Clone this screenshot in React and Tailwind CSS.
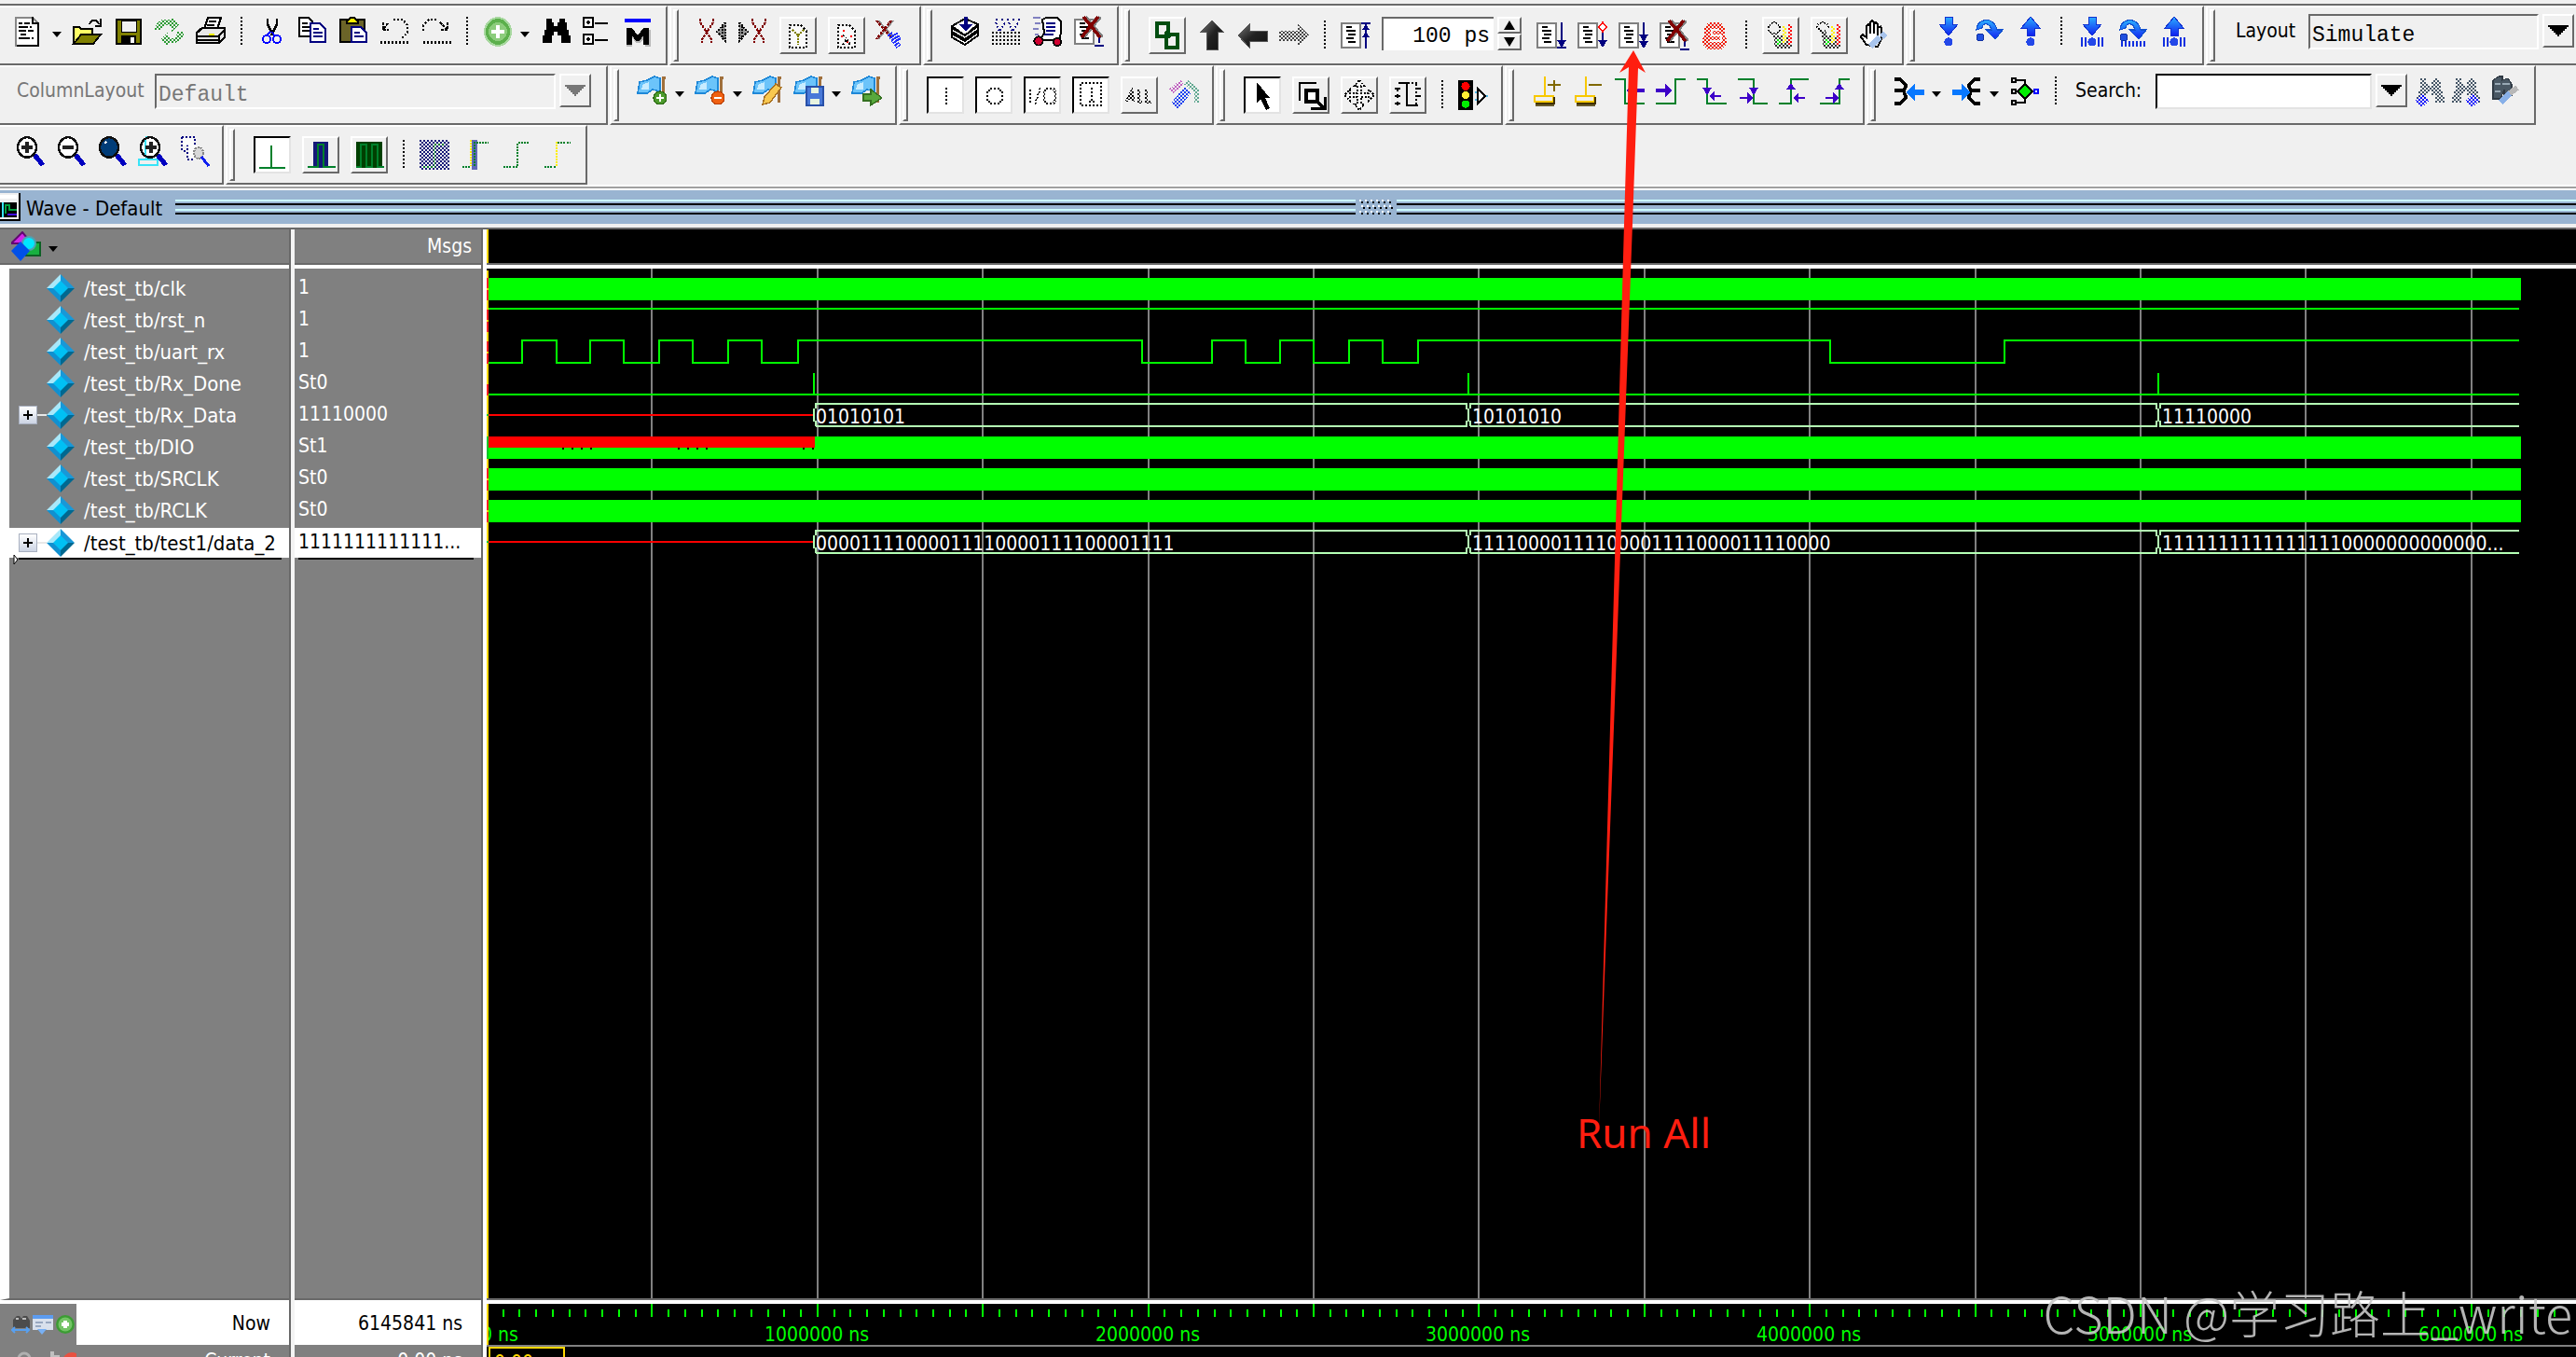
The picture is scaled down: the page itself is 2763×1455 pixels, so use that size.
import React, { useState } from 'react';

const UI_FONT = "font-['DejaVu_Sans_Condensed','DejaVu_Sans',sans-serif]";
const MONO_FONT = "font-['Liberation_Mono',monospace]";

const NAVY = '#000080';
const GREEN = '#00802b';
const VIOLET = '#3d00c8';

/* ---------- shared icon pieces (16 x 16 grid) ---------- */

const Page = () => (
  <>
    <path d="M.5 1.5h10v13H.5z" fill="#fff" stroke="#808080" />
    <path d="M3 3.5h3M3 5.5h5M4 7.5h4M3 9.5h4M4 11.5h4" />
  </>
);

const Flag = () => (
  <>
    <path d="M13 .5h2M13.5 1v13" stroke="#a0703c" strokeWidth="1.5" />
    <path d="M1 3l4-1 4-2 3 1v7l-4-1-3 2H0z" fill="#6cc4fa" stroke="#1e88d8" strokeWidth=".8" />
    <path d="M3 4l3-1v4H2z" fill="#c8ecff" stroke="none" />
  </>
);

const BlueDown = () => (
  <path d="M6 0h4v4h3L8 10 3 4h3z" fill="url(#blueGrad)" stroke="#1030d0" strokeWidth=".5" />
);
const BlueUp = () => (
  <path d="M6 10h4V6h3L8 0 3 6h3z" fill="url(#blueGrad)" stroke="#1030d0" strokeWidth=".5" />
);
const BlueOver = () => (
  <>
    <path d="M1 7C1 1 10-1 12 7h3l-4 5-5-5h3C8 3 4 3 4 6z" fill="url(#blueGrad)" stroke="#1050d0" strokeWidth=".6" />
    <circle cx="3" cy="11" r="2" fill="#2050e0" stroke="#1030a0" strokeWidth=".5" />
  </>
);
const Dot = () => <circle cx="8" cy="13.5" r="2.3" fill="#2448e8" stroke="none" />;

const Lens = ({ fill = '#fff' }) => (
  <>
    <path d="M10.500 10l4.500 5.500" stroke="#0000c0" strokeWidth="2.6" />
    <ellipse cx="6.500" cy="6" rx="5" ry="5.400" fill={fill} stroke="#101010" strokeWidth="1.2" />
  </>
);

const RedX = () => (
  <>
    <path d="M6 0l9 11M14 0L5 11" stroke="#808080" strokeWidth="2" />
    <path d="M5 0l9 11M13 0L4 11" stroke="#800000" strokeWidth="1.8" />
  </>
);

const Plus = () => (
  <>
    <ellipse cx="8" cy="8" rx="7" ry="7.4" fill="#5cb04c" stroke="#a8d8a0" />
    <circle cx="8" cy="8" r="5" fill="#8ccc7c" stroke="none" />
    <path d="M8 4.5v7M4.5 8h7" stroke="#fff" strokeWidth="2.4" />
  </>
);

const Binoculars = ({ fill = '#000' }) => (
  <path
    d="M3 1h3v2h1v2h2V3h1V1h3v2h1v4h1v3h1v4h-5v-4H9V8H7v2H6v4H1v-4h1V7h1V3z"
    fill={fill}
    stroke="none"
  />
);

const ICONS = {
  newDoc: (
    <>
      <path d="M.5.5h9l3 3v12H.5z" fill="#fff" stroke="#888" />
      <path d="M9.5 0v3.5h3V15M1 15.5h12" />
      <path d="M2 3.5h2M5 3.5h3M2 5.5h5M8 5.5h1M2 7.5h4M7 7.5h3M3 9.5h3M2 11.5h6M9 11.5h1" />
    </>
  ),
  open: (
    <>
      <path d="M9 4c1-3 4-3 5 0M15 1v4h-3" />
      <path d="M.5 14.5v-9h3l1 1h6v3" fill="#ff6" />
      <path d="M.5 14.5l4-5h10.500l-4 5z" fill="#808000" />
    </>
  ),
  save: (
    <>
      <path d="M1.500 1.500h13v13h-13z" fill="#808000" />
      <path d="M4 2h8v6H4z" fill="#f0f0f0" stroke="#000" strokeWidth=".5" />
      <path d="M4 10h8v4H4z" fill="#000" stroke="none" />
      <path d="M9 11h2v3H9z" fill="#fff" stroke="none" />
    </>
  ),
  reload: (
    <>
      <path d="M0 7c0-5 6-7 9-5V0l4 4-4 4V5C6 4 4 5 4 7z" fill="#2c9a34" stroke="none" />
      <path d="M16 8c0 5-6 7-9 6v2l-4-4 4-4v3c3 1 5 0 5-3z" fill="#2c9a34" stroke="none" />
    </>
  ),
  print: (
    <>
      <path d="M4.500 6.500l2-6h7l-2 6z" fill="#fff" />
      <path d="M7 2.500h4M6 4.500h4" />
      <path d="M.5 8.500l3-2.500h12v5l-3 3H.5z" fill="#e8e8e8" strokeWidth="1.300" />
      <path d="M1 10.500h11l3-3M1 12.500h11M12.500 10v4" />
      <path d="M7 9.500h3" stroke="#ee0" />
    </>
  ),
  cut: (
    <>
      <path d="M5.500 1v3l1 2 1 2M10.500 1v3l-1 2-2 4" strokeWidth="1.300" />
      <path d="M7 8L5 10M8 8l1 2" stroke="#00f" />
      <circle cx="5" cy="12" r="2" stroke="#00f" />
      <circle cx="10.500" cy="12" r="2" stroke="#00f" />
    </>
  ),
  copy: (
    <>
      <path d="M.5.5h5l2 2v8h-7z" fill="#fff" />
      <path d="M2 3.500h3M2 5.500h4M2 7.500h4" />
      <path d="M6.500 3.500h5l3 3v7h-8z" fill="#fff" stroke={NAVY} />
      <path d="M8 6.500h3M8 8.500h5M8 10.500h5" stroke={NAVY} />
    </>
  ),
  paste: (
    <>
      <path d="M.5 1.500h13v12H.5z" fill="#6b6428" />
      <path d="M4 2.500L6 .5h2l2 2v1H4z" fill="#fe0" />
      <path d="M6.500 5.500h5l3 3v5h-8z" fill="#fff" stroke={NAVY} />
      <path d="M8 8.500h3M8 10.500h5" stroke={NAVY} />
    </>
  ),
  undo: (
    <>
      <path d="M1.500 3v4h3M4 3.500L1.500 7" strokeDasharray="1.500 .5" />
      <path d="M7 1.500h5l2.500 3v4l-3 3" strokeDasharray="1 1" strokeWidth="1.200" />
      <path d="M0 13.500h15" strokeDasharray="1 1" strokeWidth="1.500" />
    </>
  ),
  redo: (
    <>
      <path d="M14 3v4h-4M10 3l4 4" strokeDasharray="1.500 .5" />
      <path d="M8 1.500H4l-3 3v4" strokeDasharray="1 1" strokeWidth="1.200" />
      <path d="M1 13.500h15" strokeDasharray="1 1" strokeWidth="1.500" />
    </>
  ),
  add: <Plus />,
  find: <Binoculars />,
  tree: (
    <>
      <path d="M1 .5h5v5H1zM1 9.500h5v5H1z" fill="#fff" />
      <path d="M2.500 3h2.200M3.500 2v2.200M2.500 12h2.200M3.500 11v2.200M7 3.500h7M7 12.500h7" />
    </>
  ),
  macro: (
    <>
      <path d="M2 7h3l3 4 3-4h4v9h-3v-5l-3 3H7l-2-3v5H2z" fill="#b8b8b8" stroke="none" />
      <path d="M1 1h14v2H1z" fill="#00f" stroke="none" />
      <path d="M2 6h3l3 4 3-4h3v9h-3v-5l-2 3H7l-2-3v5H2z" fill="#000" stroke="none" />
    </>
  ),
  waveCutL: (
    <>
      <path d="M1.500 1v2l6 9v2M8.500 1v2l-6 9v2" stroke="#800000" strokeWidth="1.200" strokeDasharray="1.500 .5" />
      <path d="M15 3l-4.500 5 4.500 5zM13.500 5v6" fill="#999" strokeDasharray="1 .6" />
    </>
  ),
  waveCutR: (
    <>
      <path d="M7.500 1v2l6 9v2M14.500 1v2l-6 9v2" stroke="#800000" strokeWidth="1.200" strokeDasharray="1.500 .5" />
      <path d="M.5 3L5 8l-4.500 5zM2 5v6" fill="#999" strokeDasharray="1 .6" />
    </>
  ),
  docY: (
    <>
      <path d="M3.500 2.500h6l3 3v9h-9z" fill="#fafafa" strokeDasharray="1 1" />
      <path d="M5 5l3 3 3-3M8 8v5" stroke="#808000" strokeDasharray="1 .5" />
    </>
  ),
  docDots: (
    <>
      <path d="M3.500 2.500h6l3 3v9h-9z" fill="#fafafa" strokeDasharray="1 1" />
      <path d="M6 5.500h1M10 8.500h1M5 8.500h1M8 11.500h1" stroke="#f00" />
      <path d="M6 13l2-3 2 3M6 8l2 1" strokeDasharray="1 1" />
    </>
  ),
  waveErase: (
    <>
      <path d="M1 0l8 9M9 0L1 10" stroke="#909090" />
      <path d="M0 0l8 9M8 0L0 10" stroke="#800000" strokeWidth="1.200" strokeDasharray="1.500 .5" />
      <path d="M7 7l5 7M10 7l2 4" stroke="#2030ff" strokeWidth="3" strokeDasharray="1 .6" />
    </>
  ),
  stackDown: (
    <>
      <path d="M.5 11l7 4 7-5v-2l-7 5-7-4zM.5 8l7 4 7-5V5l-7 5-7-4zM.5 5l7-4 7 3-7 6z" fill="#fff" />
      <path d="M8 0v6" stroke={NAVY} strokeWidth="2" />
      <path d="M4.500 4h7L8 8z" fill={NAVY} stroke="none" />
    </>
  ),
  compileAll: (
    <>
      <path d="M2 1.500h14" stroke={NAVY} strokeDasharray="1 2" />
      <path d="M2 3l2 5 3-5M9 3l2 5 3-5" stroke={NAVY} strokeDasharray="1 1" />
      <path d="M0 8.500h16M0 10.500h16M0 12.500h16M0 14.500h16" strokeDasharray="1 1" />
    </>
  ),
  simulate: (
    <>
      <path d="M0 .5h4M1 3.500h3M0 6.500h3M1 9.500h2" stroke="#8080c0" />
      <path d="M5 1.500l2-1h6l2 2v6l-1 4H4l2-4z" fill="#fff" />
      <path d="M7 3.500h5M7 5.500h5M7 7.500h5M6 9.500h5" stroke={NAVY} />
      <circle cx="3" cy="13" r="2.300" fill="#d00030" />
      <circle cx="13" cy="13.500" r="2" fill="#d00030" />
    </>
  ),
  simBreak: (
    <>
      <Page />
      <path d="M13.500 8v6M11 15.500h5" stroke={NAVY} />
      <RedX />
    </>
  ),
  chain: (
    <>
      <path d="M2.500 1.500h6v7h-6z" stroke="#004d10" strokeWidth="2" />
      <path d="M7.500 7.500h6v7h-6z" stroke="#004d10" strokeWidth="2" />
      <path d="M7 6l3 3" stroke="#004d10" strokeWidth="2" />
    </>
  ),
  arrowUp: <path d="M8 0l6 6h-3v9.500H5V6H2z" fill="url(#darkGrad)" stroke="#555" strokeWidth=".5" />,
  arrowLeft: <path d="M0 8l6-6v3.500h9.500V11H6v3.500z" fill="url(#darkGrad)" stroke="#555" strokeWidth=".5" />,
  arrowRight: <path d="M16 8l-6-6v3.500H0V11h10v3.500z" fill="#444" stroke="none" />,
  restart: (
    <>
      <Page />
      <path d="M13.500 15V2M11 1.500h5" stroke={NAVY} />
      <path d="M11.500 5l2-3 2 3zM11.500 9l2-3 2 3z" fill={NAVY} stroke="none" />
    </>
  ),
  run: (
    <>
      <Page />
      <path d="M13.500 1v12M11 14.500h5" stroke={NAVY} />
      <path d="M11 10.500h5l-2.500 4z" fill={NAVY} stroke="none" />
    </>
  ),
  runStep: (
    <>
      <Page />
      <path d="M13.500 6v7" stroke={NAVY} />
      <path d="M13.500 1l2 2.500-2 2.500-2-2.500z" fill="#fff" stroke="#f00" strokeWidth=".8" />
      <path d="M11 10.500h5l-2.500 4z" fill={NAVY} stroke="none" />
    </>
  ),
  runAll: (
    <>
      <Page />
      <path d="M13.500 1v12" stroke={NAVY} />
      <path d="M11 7.500h5l-2.500 4zM11 11h5l-2.500 4z" fill={NAVY} stroke="none" />
    </>
  ),
  stop: (
    <>
      <path d="M4 1h7l2 3v4l1 2v3l-3 2.500H4L1 13v-3l1-2V4z" fill="#f01800" stroke="none" />
      <path d="M10 5H6v3h5v3H5" stroke="#fff" strokeWidth="1.300" />
    </>
  ),
  profA: (
    <>
      <circle cx="4.500" cy="4" r="3" />
      <path d="M4 8h10v7H5z" fill="#333" stroke="none" />
      <path d="M10 3v9" stroke="#fe0" strokeWidth="2" />
      <path d="M13 2v11" stroke="#f00" strokeWidth="2" />
      <path d="M7 10v3" stroke="#0e0" strokeWidth="2" />
    </>
  ),
  profB: (
    <>
      <path d="M1 4c1-4 6-4 7 0M2 4l4 4M6 5v3" />
      <path d="M4 8h10v7H5z" fill="#333" stroke="none" />
      <path d="M10 3v9" stroke="#fe0" strokeWidth="2" />
      <path d="M13 2v11" stroke="#f00" strokeWidth="2" />
      <path d="M7 10v3" stroke="#0e0" strokeWidth="2" />
    </>
  ),
  hand: (
    <>
      <path d="M4 13L.8 8.500l1-1L4 9V3l1-1 1 1V1l1-1 1.200 1v1l1-1 1 1v2l1.300-.8L12 4v6l-2 4z" fill="#fff" />
      <path d="M6 3v4M8.200 2v5M10.200 4v4" />
      <path d="M6 14l5-5M12 9l2-2" stroke="#a8c4ec" strokeWidth="3" />
    </>
  ),
  stepIn: (<><BlueDown /><Dot /></>),
  stepOver: <BlueOver />,
  stepOut: (<><BlueUp /><Dot /></>),
  stepInC: (
    <>
      <BlueDown /><Dot />
      <path d="M2.500 11v5M4.500 11v5M11.500 11v5M13.500 11v5" stroke="#1030e0" />
    </>
  ),
  stepOverC: (
    <>
      <BlueOver />
      <path d="M1.500 14.500h14" stroke="#1030e0" strokeWidth="3" strokeDasharray="1 1" />
    </>
  ),
  stepOutC: (
    <>
      <BlueUp /><Dot />
      <path d="M2.500 11v5M4.500 11v5M11.500 11v5M13.500 11v5" stroke="#1030e0" />
    </>
  ),
  flagAdd: (
    <>
      <Flag />
      <circle cx="12" cy="11.500" r="3.500" fill="#4c9a2c" stroke="#2c6a14" strokeWidth=".6" />
      <path d="M12 9.500v4M10 11.500h4" stroke="#fff" strokeWidth="1.300" />
    </>
  ),
  flagDel: (
    <>
      <Flag />
      <circle cx="12" cy="11.500" r="3.500" fill="#f06010" stroke="#b84000" strokeWidth=".6" />
      <path d="M10 11.500h4" stroke="#fff" strokeWidth="1.300" />
    </>
  ),
  flagEdit: (
    <>
      <Flag />
      <path d="M5 15l1-4 6-7 3 2-6 8z" fill="#f8c850" stroke="#a87020" strokeWidth=".7" />
    </>
  ),
  flagSave: (
    <>
      <Flag />
      <path d="M6.500 5.500h9v10h-9z" fill="#4878d8" stroke="#2850a8" strokeWidth=".7" />
      <path d="M9 6h4v3H9zM8.500 12h5v3h-5z" fill="#e8f4e0" stroke="none" />
    </>
  ),
  flagGo: (
    <>
      <Flag />
      <path d="M6 9.500h4V7l6 4.500-6 4V13H6z" fill="#58a83c" stroke="#347020" strokeWidth=".7" />
    </>
  ),
  portI: <path d="M8.500 4v8M7 12.500h3M7 4.500h2" strokeWidth="1.300" />,
  portO: <path d="M6 4.500h5l1.500 2v4l-1.500 2H6l-1.500-2v-4z" strokeWidth="1.300" />,
  portIO: <path d="M1.500 4v9M7 4l-3 9M10 4.500h4l1 2v4l-1 2h-4l-1-2v-4z" strokeWidth="1.200" />,
  portInt: <path d="M2.500 1.500h11v12h-11zM7 4.500h1.500v7M7 11.500h3" />,
  portAll: <path d="M1 11.500l3-6 1 6M2 9.500h3M7.500 5v6.500h2M11.500 5v6.500h3" strokeWidth="1.500" />,
  portEdit: (
    <>
      <path d="M3 14l7-9" stroke="#1840f0" strokeWidth="5" />
      <path d="M1 6l6-5" stroke="#c060c0" strokeWidth="3" />
      <path d="M9 1l6 5v6" stroke="#60a890" strokeWidth="3" />
    </>
  ),
  pointer: <path d="M5 1v11l2-2 3 6 2-1-2.500-5.500H12z" fill="#000" stroke="none" />,
  zoomBox: (
    <>
      <path d="M2 11V1.500h9" strokeWidth="1.200" />
      <path d="M5.500 5.500h6v6h-6z" fill="#fff" strokeWidth="2" />
      <path d="M8 15h7.500V9M11 11l4 4" strokeWidth="1.500" />
    </>
  ),
  pan: (
    <path
      d="M8 0l2.500 3H9v4h4V5l3 3-3 3V9H9v4h1.500L8 16l-2.500-3H7V9H3v2L0 8l3-3v2h4V3H5.500z"
      strokeWidth=".9"
      strokeDasharray="1 .8"
      fill="#fff"
    />
  ),
  editWave: (
    <>
      <path d="M3 1.500h4.500v12h6" />
      <path d="M8 1.500h6M12.500 2v11" strokeDasharray="1 1" />
      <path d="M1 4.500h3M1 8.500h3M1 12.500h3M2.500 4v2M2.500 7.500v2M2.500 11.500v2M12 4.500h3M12 8.500h3" />
    </>
  ),
  traffic: (
    <>
      <path d="M0 0h8v16H0z" fill="#000" stroke="none" />
      <circle cx="4" cy="3.200" r="2.300" fill="#f00" stroke="none" />
      <circle cx="4" cy="8" r="2" fill="#fe3" stroke="none" />
      <circle cx="4" cy="12.800" r="2" fill="#0e0" stroke="none" />
      <path d="M9 6.500h2M9 10.500h2M15 8.500h1" stroke="#50b8e8" />
      <path d="M10.500 4.500v8l4-4z" fill="#fff" />
    </>
  ),
  cursorAdd: (
    <>
      <path d="M1.500 15.500h10" stroke="#665a30" />
      <path d="M6.500 0v11M1 10.500h10v3H1z" stroke="#f8c800" strokeWidth="1.300" />
      <path d="M11.500 11v3.500H1.500" stroke="#403000" />
      <path d="M8 4.500h7M11.500 2v6" stroke="#806800" strokeWidth="1.300" />
    </>
  ),
  cursorDel: (
    <>
      <path d="M1.500 15.500h10" stroke="#665a30" />
      <path d="M6.500 0v11M1 10.500h10v3H1z" stroke="#f8c800" strokeWidth="1.300" />
      <path d="M11.500 11v3.500H1.500" stroke="#403000" />
      <path d="M8 4.500h7" stroke="#806800" strokeWidth="1.300" />
    </>
  ),
  prevTrans: (
    <>
      <path d="M0 1.500h5.500v13H16" stroke={GREEN} />
      <path d="M16 7.500h-7" stroke={VIOLET} strokeWidth="2" />
      <path d="M6 7.500L10 4v7z" fill={VIOLET} stroke="none" />
    </>
  ),
  nextTrans: (
    <>
      <path d="M0 14.500h10.500v-13H16" stroke={GREEN} />
      <path d="M0 7.500h6" stroke={VIOLET} strokeWidth="2" />
      <path d="M9 7.500L5 4v7z" fill={VIOLET} stroke="none" />
    </>
  ),
  prevFall: (
    <>
      <path d="M0 1.500h5.500v13H16" stroke={GREEN} />
      <path d="M13 10.500H8" stroke={VIOLET} />
      <path d="M6.500 10.500l3-3v6zM3 6h5l-2.500 4z" fill={VIOLET} stroke="none" />
    </>
  ),
  nextFall: (
    <>
      <path d="M0 1.500h8.500v13H16" stroke={GREEN} />
      <path d="M1 11.500h5" stroke={VIOLET} />
      <path d="M8 11.500l-3-3v6zM6 6h5l-2.500 4z" fill={VIOLET} stroke="none" />
    </>
  ),
  prevRise: (
    <>
      <path d="M0 14.500h6.500v-13H16" stroke={GREEN} />
      <path d="M14 11.500H9" stroke={VIOLET} />
      <path d="M7.500 11.500l3-3v6zM4 7h5L6.500 3.500z" fill={VIOLET} stroke="none" />
    </>
  ),
  nextRise: (
    <>
      <path d="M0 14.500h10.500v-13H16" stroke={GREEN} />
      <path d="M3 11.500h5" stroke={VIOLET} />
      <path d="M10 11.500l-3-3v6zM8 7h5l-2.500-3.500z" fill={VIOLET} stroke="none" />
    </>
  ),
  drivers: (
    <>
      <path d="M0 1.500h3l3 3v1L5 7.500H0M0 14.500h3l3-3v-1l-1-2" strokeWidth="1.700" />
      <path d="M16 7v3h-5v3L6 8.500 11 4v3z" fill="#0878ff" stroke="none" />
    </>
  ),
  readers: (
    <>
      <path d="M15 1.500h-3l-3 3v1l1 2h5M15 14.500h-3l-3-3v-1l1-2" strokeWidth="1.700" />
      <path d="M0 7v3h5v3l5-4.500L5 4v3z" fill="#0878ff" stroke="none" />
    </>
  ),
  fanout: (
    <>
      <path d="M1 1h2v2H1zM1 7h2v2H1zM1 13h2v2H1zM3 2h5v12H3M3 8h10" />
      <path d="M8 4l4 4-4 4-4-4z" fill="#0e0" />
      <path d="M13 7h2v2h-2z" stroke="#00f" fill="#fff" />
    </>
  ),
  findPrev: (
    <>
      <Binoculars fill="#445566" />
      <path d="M0 13l4-3.500 4 3.500-4 3.500z" fill="#00f" stroke="none" />
    </>
  ),
  findNext: (
    <>
      <Binoculars fill="#445566" />
      <path d="M16 13l-4-3.500L8 13l4 3.500z" fill="#00f" stroke="none" />
    </>
  ),
  findOpts: (
    <>
      <path d="M1 2l3-2h2v2l3-1 2 3v6H7V7L5 12H1V7z" fill="#4a5864" stroke="#303a44" strokeWidth=".6" />
      <path d="M2 4h3M6 4h4M2 8h3" stroke="#98a8b4" />
      <path d="M5 14l5-5" stroke="#88b0e8" strokeWidth="3.500" />
      <path d="M10 9l4-3" stroke="#b8b8b8" strokeWidth="3" />
    </>
  ),
  zoomIn: (
    <>
      <Lens />
      <path d="M6.500 3v6M3.500 6h6" strokeWidth="1.800" stroke="#222" />
    </>
  ),
  zoomOut: (
    <>
      <Lens />
      <path d="M3.500 6h6" strokeWidth="1.800" stroke="#222" />
    </>
  ),
  zoomFull: (
    <>
      <Lens fill="#003c78" />
      <path d="M4 4l1-1" stroke="#fff" />
    </>
  ),
  zoomCursor: (
    <>
      <path d="M4.500 0v12M.5 12.500h10v3H.5z" stroke="#38e4f8" />
      <Lens />
      <path d="M4 2v8" stroke="#38e4f8" />
      <path d="M7 3v6M4 6h6" strokeWidth="1.800" stroke="#222" />
    </>
  ),
  zoomRange: (
    <>
      <path d="M1.500.5h7v5M1.500.5v7l3 1M4.500 4.500v8h3" stroke={NAVY} strokeDasharray="1 1" />
      <path d="M2 1h6v4H2zM5 5h6v7H5z" fill="#fff" stroke="none" opacity=".7" />
      <ellipse cx="10.500" cy="9" rx="2.500" ry="3" fill="#d8d8d8" stroke="#888" strokeDasharray="1 .5" />
      <path d="M12 11l4 5" stroke="#1020f0" strokeWidth="1.500" />
    </>
  ),
  clockEdge: <path d="M1 15h14M7.500 15V3" stroke={GREEN} />,
  pulseBlue: (
    <>
      <path d="M4 1h8v14H4z" fill="#141878" stroke="none" />
      <path d="M1 14.500h5.500v-12h3v12H16" stroke={GREEN} />
    </>
  ),
  pulseGreen: (
    <>
      <path d="M1 1h14v14H1z" fill="#004000" stroke="none" />
      <path d="M1 14.500h2.500v-12h3v12h3v-12h3v12H16" stroke={GREEN} />
    </>
  ),
  expandFull: (
    <>
      <path d="M0 0h16v16H0z" fill="#141878" stroke="none" />
      <path d="M2 14.500h6v-12h6" stroke={GREEN} />
    </>
  ),
  expandBlue: (
    <>
      <path d="M6 0h3v16H6z" fill="#6068b8" stroke="none" />
      <path d="M1 14.500h4" stroke={GREEN} strokeDasharray="1 .5" />
      <path d="M5.500 0v14" stroke="#fe0" strokeDasharray="1 .5" />
      <path d="M7.500 14V1.500H15" stroke={GREEN} strokeDasharray="1 .5" />
    </>
  ),
  expandGreen: <path d="M1 14.500h7.500v-13H15" stroke={GREEN} strokeDasharray="1 .6" />,
  expandYellow: (
    <>
      <path d="M1 14.500h6M8 1.500h7" stroke={GREEN} strokeDasharray="1 .6" />
      <path d="M7.500 1v13" stroke="#fe0" strokeDasharray="1 .5" />
    </>
  ),
};

// disabled tools are drawn through a checkerboard
const DIM = [
  'reload',
  'arrowRight',
  'stop',
  'profA',
  'profB',
  'portI',
  'portO',
  'portIO',
  'portInt',
  'portAll',
  'portEdit',
  'findPrev',
  'findNext',
  'expandFull',
];

const Icon = ({ name }) => (
  <svg
    viewBox="0 0 16 16"
    className="h-8 w-8 shrink-0 overflow-visible"
    fill="none"
    stroke="#000"
    shapeRendering="crispEdges"
    aria-hidden="true"
  >
    {DIM.includes(name) ? <g mask="url(#dither)">{ICONS[name]}</g> : ICONS[name]}
  </svg>
);

const IconDefs = () => (
  <svg className="absolute h-0 w-0" aria-hidden="true">
    <defs>
      <pattern id="checker" width="2" height="2" patternUnits="userSpaceOnUse">
        <path d="M0 0h1v1H0zM1 1h1v1H1z" fill="#fff" shapeRendering="crispEdges" />
      </pattern>
      <mask id="dither" maskUnits="userSpaceOnUse" x="0" y="0" width="16" height="16">
        <rect width="16" height="16" fill="url(#checker)" />
      </mask>
      <linearGradient id="blueGrad" x1="0" y1="0" x2="0" y2="1">
        <stop offset="0" stopColor="#2cb0ff" />
        <stop offset="1" stopColor="#1020f0" />
      </linearGradient>
      <linearGradient id="darkGrad" x1="0" y1="0" x2="1" y2="1">
        <stop offset="0" stopColor="#777" />
        <stop offset=".5" stopColor="#222" />
        <stop offset="1" stopColor="#111" />
      </linearGradient>
    </defs>
  </svg>
);

/* ---------- toolbar pieces ---------- */

const Caret = () => (
  <svg viewBox="0 0 5 3" className="mt-1.5 h-1.5 w-2.5" aria-hidden="true">
    <path d="M0 0h5L2.500 3z" fill="#000" />
  </svg>
);

const Tool = ({ name }) => (
  <button type="button" aria-label={name} className="flex shrink-0">
    <Icon name={name} />
  </button>
);

const MenuTool = ({ name }) => (
  <button type="button" aria-label={name} className="flex w-[50px] shrink-0 items-center justify-between">
    <Icon name={name} />
    <Caret />
  </button>
);

const RaisedTool = ({ name }) => (
  <button
    type="button"
    aria-label={name}
    className="flex h-10 w-10 shrink-0 items-center justify-center border-2 border-t-white border-l-white border-r-[#696969] border-b-[#696969]"
  >
    <Icon name={name} />
  </button>
);

const SunkenTool = ({ name }) => (
  <button
    type="button"
    aria-label={name}
    aria-pressed="true"
    className="flex h-10 w-10 shrink-0 items-center justify-center border-2 border-t-black border-l-black border-r-[#e3e3e3] border-b-[#e3e3e3] bg-white"
  >
    <Icon name={name} />
  </button>
);

const Separator = () => (
  <div className="flex w-2.5 shrink-0 justify-center">
    <div className="h-8 w-0.5 bg-[repeating-linear-gradient(#000_0_2px,transparent_2px_4px)]" />
  </div>
);

const Toolbar = ({ children, first, last, tall }) => (
  <div
    className={`flex h-16 border-t-2 border-b-2 border-t-white border-b-[#696969] ${first ? 'pl-4' : 'border-l-2 border-l-white pl-0.5'} ${last ? 'flex-1' : 'border-r-2 border-r-[#696969] pr-3.5'}`}
  >
    {!first && (
      <div className="mt-0.5 mr-5 h-14 w-1.5 shrink-0 border-2 border-t-white border-l-white border-r-[#696969] border-b-[#696969]" />
    )}
    <div className={`mt-2.5 flex items-center gap-3 ${tall ? 'h-10' : 'h-8'} ${last ? 'flex-1' : ''}`}>
      {children}
    </div>
  </div>
);

const DropButton = ({ label, muted }) => (
  <button
    type="button"
    aria-label={label}
    className="flex h-9 w-[34px] shrink-0 items-center justify-center border-2 border-t-white border-l-white border-r-[#696969] border-b-[#696969]"
  >
    <svg viewBox="0 0 13 7" className="mt-0.5 h-3.5 w-[26px]" shapeRendering="crispEdges" aria-hidden="true">
      <path d="M1 0h11v1h-1v1h-1v1H9v1H8v1H7v1H6V5H5V4H4V3H3V2H2V1H1z" fill={muted ? '#777' : '#000'} />
    </svg>
  </button>
);

const TopToolbars = () => {
  const [runLength, setRunLength] = useState('100 ps');
  const [search, setSearch] = useState('');

  return (
    <header className="flex flex-col pt-1">
      <div className="h-0.5 bg-[#696969]" />

      {/* Standard, edit, compile, simulate, step and layout bars */}
      <div className="flex gap-0.5">
        <Toolbar first>
          <MenuTool name="newDoc" />
          <Tool name="open" />
          <Tool name="save" />
          <Tool name="reload" />
          <Tool name="print" />
          <Separator />
          <Tool name="cut" />
          <Tool name="copy" />
          <Tool name="paste" />
          <Tool name="undo" />
          <Tool name="redo" />
          <Separator />
          <MenuTool name="add" />
          <Tool name="find" />
          <Tool name="tree" />
          <Tool name="macro" />
        </Toolbar>
        <Toolbar tall>
          <div className="flex gap-3 self-start">
            <Tool name="waveCutL" />
            <Tool name="waveCutR" />
          </div>
          <RaisedTool name="docY" />
          <RaisedTool name="docDots" />
          <Tool name="waveErase" />
        </Toolbar>
        <Toolbar>
          <Tool name="stackDown" />
          <Tool name="compileAll" />
          <Tool name="simulate" />
          <Tool name="simBreak" />
        </Toolbar>
        <Toolbar tall>
          <RaisedTool name="chain" />
          <Tool name="arrowUp" />
          <Tool name="arrowLeft" />
          <Tool name="arrowRight" />
          <Separator />
          <Tool name="restart" />
          <div className="flex w-[154px] shrink-0 gap-1 self-start">
            <input
              aria-label="Run length"
              value={runLength}
              onChange={(e) => setRunLength(e.target.value)}
              className={`h-9 w-[120px] border-t-2 border-l-2 border-[#696969] bg-white pt-1 pr-1 text-right text-[23px] text-black outline-none ${MONO_FONT}`}
            />
            <div className="flex w-[26px] flex-col">
              <button
                type="button"
                aria-label="Increase run length"
                className="flex h-[18px] items-center justify-center border-2 border-t-white border-l-white border-r-[#696969] border-b-[#696969]"
              >
                <svg viewBox="0 0 6 5" className="h-2.5 w-3" aria-hidden="true"><path d="M3 0l3 5H0z" /></svg>
              </button>
              <button
                type="button"
                aria-label="Decrease run length"
                className="flex h-[18px] items-center justify-center border-2 border-t-white border-l-white border-r-[#696969] border-b-[#696969]"
              >
                <svg viewBox="0 0 6 5" className="h-2.5 w-3" aria-hidden="true"><path d="M0 0h6L3 5z" /></svg>
              </button>
            </div>
          </div>
          <Tool name="run" />
          <Tool name="runStep" />
          <Tool name="runAll" />
          <Tool name="simBreak" />
          <Tool name="stop" />
          <Separator />
          <RaisedTool name="profA" />
          <RaisedTool name="profB" />
          <Tool name="hand" />
        </Toolbar>
        <Toolbar>
          <Tool name="stepIn" />
          <Tool name="stepOver" />
          <Tool name="stepOut" />
          <Separator />
          <Tool name="stepInC" />
          <Tool name="stepOverC" />
          <Tool name="stepOutC" />
        </Toolbar>
        <Toolbar last>
          <label htmlFor="layout" className={`w-[68px] shrink-0 pl-0.5 text-[21px] ${UI_FONT}`}>Layout</label>
          <div className="flex flex-1 gap-1 pr-0.5">
            <select
              id="layout"
              className={`h-[38px] min-w-0 flex-1 appearance-none border-2 border-t-[#696969] border-l-[#696969] border-r-white border-b-white bg-transparent pt-1 pl-0.5 text-[23px] text-black outline-none ${MONO_FONT}`}
            >
              <option>Simulate</option>
            </select>
            <DropButton label="Open layout list" />
          </div>
        </Toolbar>
      </div>

      {/* Column layout, bookmarks, ports, mouse mode, cursors and search bars */}
      <div className="flex gap-0.5">
        <Toolbar first>
          <label htmlFor="columns" className={`w-[138px] shrink-0 pl-0.5 text-[21px] text-[#777] ${UI_FONT}`}>ColumnLayout</label>
          <div className="mr-0.5 flex w-[468px] gap-1">
            <select
              id="columns"
              disabled
              className={`h-[38px] min-w-0 flex-1 appearance-none border-2 border-t-[#696969] border-l-[#696969] border-r-white border-b-white bg-transparent pt-1 pl-0.5 text-[23px] text-[#777] opacity-100 outline-none ${MONO_FONT}`}
            >
              <option>Default</option>
            </select>
            <DropButton label="Open column list" muted />
          </div>
        </Toolbar>
        <Toolbar>
          <MenuTool name="flagAdd" />
          <MenuTool name="flagDel" />
          <Tool name="flagEdit" />
          <MenuTool name="flagSave" />
          <Tool name="flagGo" />
        </Toolbar>
        <Toolbar tall>
          <SunkenTool name="portI" />
          <SunkenTool name="portO" />
          <SunkenTool name="portIO" />
          <SunkenTool name="portInt" />
          <RaisedTool name="portAll" />
          <Tool name="portEdit" />
        </Toolbar>
        <Toolbar tall>
          <SunkenTool name="pointer" />
          <RaisedTool name="zoomBox" />
          <RaisedTool name="pan" />
          <RaisedTool name="editWave" />
          <Separator />
          <Tool name="traffic" />
        </Toolbar>
        <Toolbar>
          <Tool name="cursorAdd" />
          <Tool name="cursorDel" />
          <Tool name="prevTrans" />
          <Tool name="nextTrans" />
          <Tool name="prevFall" />
          <Tool name="nextFall" />
          <Tool name="prevRise" />
          <Tool name="nextRise" />
        </Toolbar>
        <Toolbar>
          <MenuTool name="drivers" />
          <MenuTool name="readers" />
          <Tool name="fanout" />
          <Separator />
          <label htmlFor="search" className={`w-[78px] shrink-0 pl-1 text-[21px] ${UI_FONT}`}>Search:</label>
          <div className="flex w-[270px] gap-1">
            <input
              id="search"
              value={search}
              onChange={(e) => setSearch(e.target.value)}
              className={`h-[38px] min-w-0 flex-1 border-2 border-t-black border-l-black border-r-[#e3e3e3] border-b-[#e3e3e3] bg-white px-1 text-[23px] outline-none ${MONO_FONT}`}
            />
            <DropButton label="Open search history" />
          </div>
          <div className="-ml-1 flex w-[70px] justify-between">
            <Tool name="findPrev" />
            <Tool name="findNext" />
          </div>
          <Tool name="findOpts" />
        </Toolbar>
      </div>

      {/* Zoom and wave expansion bars */}
      <div className="flex gap-0.5">
        <Toolbar first>
          <Tool name="zoomIn" />
          <Tool name="zoomOut" />
          <Tool name="zoomFull" />
          <Tool name="zoomCursor" />
          <Tool name="zoomRange" />
        </Toolbar>
        <Toolbar tall>
          <SunkenTool name="clockEdge" />
          <RaisedTool name="pulseBlue" />
          <RaisedTool name="pulseGreen" />
          <Separator />
          <Tool name="expandFull" />
          <Tool name="expandBlue" />
          <Tool name="expandGreen" />
          <Tool name="expandYellow" />
        </Toolbar>
      </div>
    </header>
  );
};

/* ---------- wave window ---------- */

const TitleRule = () => (
  <div className="flex flex-1 flex-col gap-1">
    <div className="h-1.5 border-t-2 border-b-2 border-t-[#ccffff] border-b-black" />
    <div className="h-1.5 border-t-2 border-b-2 border-t-[#ccffff] border-b-black" />
  </div>
);

const TitleBar = () => (
  <div className="flex h-9 shrink-0 items-center bg-[#99b4d1]">
    <svg viewBox="0 0 11 15" className="h-[30px] w-[22px]" shapeRendering="crispEdges" aria-hidden="true">
      <path d="M0 0h11v15H0z" fill="#000" />
      <path d="M0 0h10v14H0z" fill="#f0f0f0" />
      <path d="M0 1h9v2H0z" fill="#fff" />
      <path d="M0 5h9v8H0z" fill="#000" />
      <path d="M1.500 5v8" stroke="#38e4f8" />
      <path d="M3 11V6.500h2V9h4" stroke="#00a040" fill="none" />
      <path d="M4 11.500h5" stroke="#4010e0" />
    </svg>
    <h1 className={`w-[166px] shrink-0 pt-0.5 pl-1.5 text-[22px] text-black ${UI_FONT}`}>Wave - Default</h1>
    <TitleRule />
    <svg viewBox="0 0 22 8" className="h-4 w-11" shapeRendering="crispEdges" aria-hidden="true">
      <path d="M2 .5h18M3 3.500h18M2 6.500h18" stroke="#fff" strokeDasharray="1 2" />
      <path d="M3 1.500h18M4 4.500h17M3 7.500h18" stroke="#000" strokeDasharray="1 2" />
    </svg>
    <TitleRule />
  </div>
);

const SIGNALS = [
  { name: '/test_tb/clk', value: '1' },
  { name: '/test_tb/rst_n', value: '1' },
  { name: '/test_tb/uart_rx', value: '1' },
  { name: '/test_tb/Rx_Done', value: 'St0' },
  { name: '/test_tb/Rx_Data', value: '11110000', bus: true },
  { name: '/test_tb/DIO', value: 'St1' },
  { name: '/test_tb/SRCLK', value: 'St0' },
  { name: '/test_tb/RCLK', value: 'St0' },
  { name: '/test_tb/test1/data_2', value: '1111111111111...', bus: true, selected: true },
];

const Diamond = () => (
  <svg viewBox="0 0 30 30" className="h-[30px] w-[30px] shrink-0" aria-hidden="true">
    <path d="M15 0v15H0z" fill="#a8e8fa" />
    <path d="M15 0l15 15H15z" fill="#1898d8" />
    <path d="M0 15h15v15z" fill="#1090d0" />
    <path d="M30 15L15 30V15z" fill="#006890" />
    <path d="M15 7l8 8-8 8-8-8z" fill="#00c0f4" />
  </svg>
);

const rowClass = (s) => (s.selected ? 'mt-0.5 h-8 bg-white text-black' : 'h-[34px] text-white');

const NamePane = () => (
  <section className="flex w-[312px] shrink-0 flex-col border-r-2 border-[#696969]">
    <div className="flex h-[38px] shrink-0 items-center gap-2 border-b-2 border-[#696969] bg-[#808080] pl-3">
      <svg viewBox="0 0 32 32" className="h-8 w-8" aria-hidden="true">
        <path d="M0 13L12 1l10 12z" fill="#d028e8" stroke="#600870" strokeWidth="2" />
        <path d="M16 12h15v14H16z" fill="#18b040" stroke="#0c6024" strokeWidth="2" />
        <circle cx="19" cy="13" r="7" fill="#00e8ff" stroke="#50a0b0" strokeWidth="2" />
        <path d="M10 11l10 10-10 11L0 21z" fill="#0050e8" />
      </svg>
      <Caret />
    </div>
    <ul className={`mt-1 flex-1 border-b-2 border-l-[10px] border-b-[#696969] border-l-white bg-[#808080] pt-1 text-[22px] ${UI_FONT}`}>
      {SIGNALS.map((s) => (
        <li key={s.name} className={`flex items-center pl-2.5 whitespace-nowrap ${rowClass(s)}`}>
          <div className="flex w-[30px] shrink-0 items-center">
            {s.bus && (
              <>
                <button
                  type="button"
                  aria-label={`Expand ${s.name}`}
                  className="flex h-5 w-5 items-center justify-center border border-[#a8b0c0] bg-linear-to-b from-white to-[#ccd4e4]"
                >
                  <svg viewBox="0 0 10 10" className="h-2.5 w-2.5" aria-hidden="true">
                    <path d="M5 0v10M0 5h10" stroke="#000" strokeWidth="2" />
                  </svg>
                </button>
                <div className="h-0.5 flex-1 bg-[#e8e8e8]" />
              </>
            )}
          </div>
          <Diamond />
          <span className="pl-2.5">{s.name}</span>
        </li>
      ))}
      <li className="flex items-start" aria-hidden="true">
        <svg viewBox="0 0 6 12" className="-mt-1 ml-1 h-3 w-1.5">
          <path d="M1 1v10l4-5z" fill="#fff" stroke="#000" />
        </svg>
        <div className="mr-2 h-0.5 flex-1 bg-black" />
      </li>
    </ul>
    <div className={`mt-1 shrink-0 text-[21px] ${UI_FONT}`}>
      <div className="flex h-11 items-center bg-white">
        <div className="flex h-full w-[82px] items-center bg-[#808080] pl-3">
          <svg viewBox="0 0 70 22" className="h-[22px] w-[70px]" aria-hidden="true">
            <path d="M2 14V6l4-4h3l2 3 2-3h4l3 5v8H2z" fill="#4c4c4c" />
            <path d="M5 5h3M12 5h4" stroke="#bbb" strokeWidth="2" />
            <path d="M1 17h18M4 14l-3 3 3 3M16 14l3 3-3 3" stroke="#58a0f0" strokeWidth="2" fill="none" />
            <path d="M23 1h22v16H23z" fill="#d8e0ec" />
            <path d="M23 1h22v4H23z" fill="#5c9cf0" />
            <path d="M26 9h8M26 13h6M37 9h6" stroke="#98a8c0" strokeWidth="2" />
            <path d="M28 16h10l-5 6z" fill="#78b0f4" />
            <circle cx="58" cy="11" r="10" fill="#3c9c34" />
            <circle cx="58" cy="11" r="7.500" fill="#74c466" />
            <path d="M58 7v8M54 11h8" stroke="#fff" strokeWidth="4" />
          </svg>
        </div>
        <span className="flex-1 pr-5 text-right text-black">Now</span>
      </div>
      <div className="flex h-9 items-center bg-[#808080]">
        <div className="flex h-full w-[82px] items-center pl-3">
          <svg viewBox="0 0 70 22" className="h-[22px] w-[70px]" aria-hidden="true">
            <circle cx="14" cy="8" r="6" fill="none" stroke="#b0b0b0" strokeWidth="3" />
            <path d="M36 20l12-12M44 0v6h8" stroke="#c0c0c0" strokeWidth="4" fill="none" />
            <circle cx="65" cy="11" r="10" fill="#e85040" />
          </svg>
        </div>
        <span className="flex-1 pr-5 text-right text-white">Current</span>
      </div>
    </div>
  </section>
);

const ValuePane = () => (
  <section className="flex w-[202px] shrink-0 flex-col border-r-2 border-[#696969]">
    <div className={`flex h-[38px] shrink-0 items-center justify-end border-b-2 border-[#696969] bg-[#808080] pt-0.5 pr-2.5 text-[21px] text-white ${UI_FONT}`}>
      Msgs
    </div>
    <ul className={`mt-1 flex-1 border-b-2 border-[#696969] bg-[#808080] pt-1 text-[21px] ${UI_FONT}`}>
      {SIGNALS.map((s) => (
        <li key={s.name} className={`flex items-center overflow-hidden pl-1 whitespace-nowrap ${rowClass(s)}`}>
          {s.value}
        </li>
      ))}
      <li className="mr-2 ml-1 h-0.5 bg-black" aria-hidden="true" />
    </ul>
    <div className={`mt-1 shrink-0 text-[21px] ${UI_FONT}`}>
      <div className="flex h-11 items-center justify-end bg-white pr-5 text-black">6145841 ns</div>
      <div className="flex h-9 items-center justify-end bg-[#808080] pr-5 text-white">0.00 ns</div>
    </div>
  </section>
);

const STEP = 177.4;
const MAJORS = Array.from({ length: 12 }, (_, i) => Math.round((i + 1) * STEP));
const MINORS = Array.from({ length: 125 }, (_, i) => Math.round(((i + 1) * STEP) / 10));
const END = 2180;

// level changes of uart_rx, the line starts low
const UART_EDGES = [38, 75, 111, 147, 185, 221, 259, 295, 334, 703, 778, 814, 851, 887, 925, 961, 999, 1441, 1628];
const UART_PATH = UART_EDGES.reduce((d, x, i) => `${d}H${x}V${i % 2 ? 101 : 77}`, 'M2 101') + `H${END}`;

const BUS_STARTS = [351, 1053, 1793];
const RX_DATA = ['01010101', '10101010', '11110000'];
const DATA_2 = [
  '00001111000011110000111100001111',
  '11110000111100001111000011110000',
  '11111111111111110000000000000...',
];

const Bus = ({ y, labels }) => (
  <g>
    <path d={`M2 ${y + 13}H351`} stroke="#f00" strokeWidth="2" />
    {BUS_STARTS.map((x, i) => {
      const next = BUS_STARTS[i + 1];
      const close = next ? `H${next - 2}v6M${x + 2} ${y + 25}v-6M${x + 2} ${y + 25}H${next - 2}v-6` : `H${END}M${x + 2} ${y + 19}v6H${END}`;
      return (
        <g key={x}>
          <path d={`M${x} ${y + 6}v14M${x + 2} ${y + 6}v-5${close}`} stroke="#b4ffb4" strokeWidth="2" fill="none" />
          <text x={x + (i ? 4 : 2)} y={y + 22} fill="#fff">{labels[i]}</text>
        </g>
      );
    })}
  </g>
);

const CURSOR_MARKS = [10, 44, 78, 124, 214, 248];

const WavePane = () => (
  <section className="ml-1 flex min-w-0 flex-1 flex-col">
    <div className="h-[38px] shrink-0 border-b-2 border-[#696969] bg-black">
      <div className="h-full w-0.5 bg-[#ffd700]" />
    </div>
    <div className="mt-1 min-h-0 flex-1 overflow-hidden border-b-2 border-[#696969] bg-black">
      <svg width="100%" height="100%" shapeRendering="crispEdges" className={`text-[21px] ${UI_FONT}`} role="img" aria-label="Waveforms">
        {MAJORS.map((x) => (
          <rect key={x} x={x - 1} y="0" width="2" height="100%" fill="#808080" />
        ))}
        <rect x="0" y="2" width="2" height="100%" fill="#ffd700" />
        {[10, 214, 248].map((y) => (
          <rect key={y} x="2" y={y} width="2180" height="24" fill="#0f0" />
        ))}
        <path d={`M2 43H${END}`} stroke="#0f0" strokeWidth="2" />
        <path d={UART_PATH} stroke="#0f0" strokeWidth="2" fill="none" />
        <path d={`M2 135H${END}M351 112v22M1053 112v22M1793 112v22`} stroke="#0f0" strokeWidth="2" />
        <rect x="2" y="180" width="2180" height="24" fill="#0f0" />
        <rect x="2" y="180" width="350" height="12" fill="#f00" />
        {[81, 91, 101, 111, 205, 215, 225, 235, 339, 349].map((x) => (
          <rect key={x} x={x} y="192" width="2" height="2" fill="#000" />
        ))}
        <Bus y={144} labels={RX_DATA} />
        <Bus y={280} labels={DATA_2} />
        {CURSOR_MARKS.map((y) => (
          <path key={y} d={y === 124 ? `M1 ${y}v12` : `M1 ${y}v11M1 ${y + 13}v11`} stroke="#ff2020" strokeWidth="2" />
        ))}
        <path d="M1 156v2M1 180v24M1 292v2" stroke="#00c828" strokeWidth="2" />
      </svg>
    </div>
    <div className="mt-1 h-20 shrink-0 overflow-hidden bg-black">
      <svg width="100%" height="80" shapeRendering="crispEdges" className={`text-[21px] ${UI_FONT}`} role="img" aria-label="Timeline">
        {MINORS.map((x) => (
          <rect key={x} x={x - 1} y="6" width="2" height="8" fill="#0f0" />
        ))}
        {MAJORS.map((x) => (
          <rect key={x} x={x - 1} y="0" width="2" height="14" fill="#0f0" />
        ))}
        <text x="-6" y="40" fill="#0f0">0 ns</text>
        {[1, 2, 3, 4, 5, 6].map((n) => (
          <text key={n} x={Math.round(n * 2 * STEP) - 1} y="40" textAnchor="middle" fill="#0f0">{n}000000 ns</text>
        ))}
        <rect x="0" y="0" width="2" height="44" fill="#ffd700" />
        <rect x="0" y="44" width="100%" height="2" fill="#808080" />
        <rect x="3" y="47" width="80" height="30" fill="#000" stroke="#ffd700" strokeWidth="2" />
        <text x="8" y="70" fill="#ffd700">0.00 ns</text>
      </svg>
    </div>
  </section>
);

/* Red pointer with its caption */
const RunAllNote = () => (
  <div className="pointer-events-none absolute top-0 left-0">
    <svg width="2000" height="1300" aria-hidden="true">
      <path d="M1715 1212L1742 240 1747 72 1737 78 1752 54 1765 78 1757 73 1751 240z" fill="#ff1e10" />
    </svg>
    <p className="absolute top-[1184px] left-[1691px] font-['Noto_Sans',sans-serif] text-[44px] leading-[60px] whitespace-nowrap text-[#ff1e10]">
      Run All
    </p>
  </div>
);

export default function App() {
  return (
    <main className="relative flex h-screen flex-col overflow-hidden bg-[#f0f0f0]">
      <IconDefs />
      <TopToolbars />
      <div className="h-1.5 shrink-0 border-t-2 border-b-2 border-white bg-[#a0a0a0]" />
      <TitleBar />
      <div className="mt-1 h-0.5 shrink-0 bg-[#696969]" />
      <div className="-mb-[23px] flex min-h-0 flex-1 bg-white">
        <NamePane />
        <div className="w-1 shrink-0 bg-[#f4f4f4]" />
        <ValuePane />
        <WavePane />
      </div>
      <RunAllNote />
      <p className="pointer-events-none absolute right-1 bottom-2 font-['Noto_Sans_CJK_SC',sans-serif] text-[54px] leading-[80px] font-light whitespace-nowrap text-[#c8c8c8]/90">
        CSDN @学习路上_write
      </p>
    </main>
  );
}
